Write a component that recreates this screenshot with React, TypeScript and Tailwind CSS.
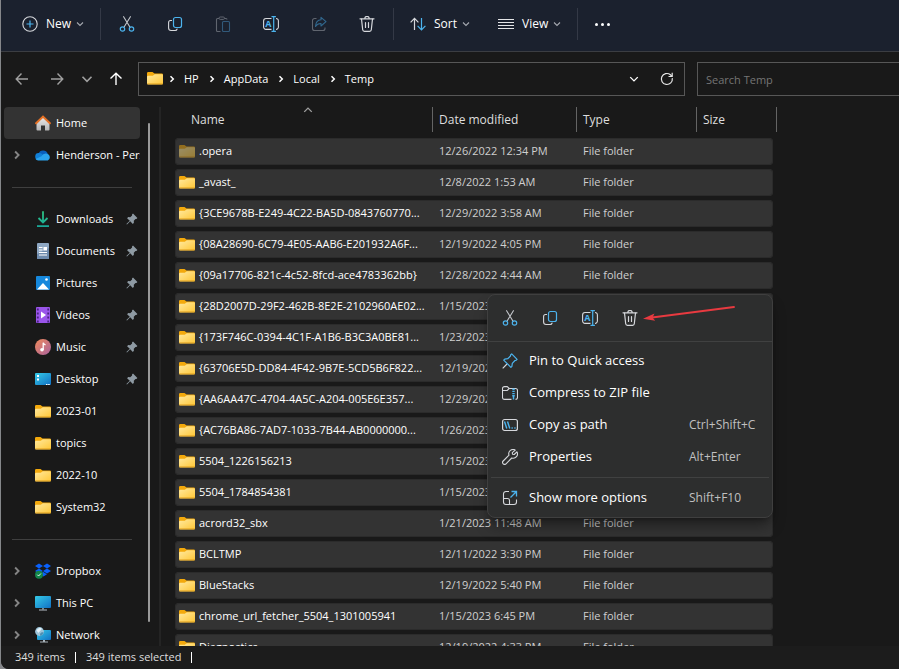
import { FC, ReactNode } from "react";

interface IconProps {
  className?: string;
}

const CutIcon: FC<IconProps> = ({ className }) => (
  <svg viewBox="0 0 16 16" className={className} fill="none" strokeLinecap="round">
    <path d="M4.6.7 10.9 11M11.4.7 5.1 11" stroke="#c4c7cc" strokeWidth="1.1" />
    <circle cx="3.5" cy="13" r="2.2" stroke="#4cb4ee" strokeWidth="1.2" />
    <circle cx="12.5" cy="13" r="2.2" stroke="#4cb4ee" strokeWidth="1.2" />
  </svg>
);

const CopyIcon: FC<IconProps> = ({ className }) => (
  <svg viewBox="0 0 16 16" className={className} fill="none">
    <path
      d="M4.6 4.5h-1a2 2 0 0 0-2 2V12a2.5 2.5 0 0 0 2.5 2.5h4a2 2 0 0 0 2-1.5"
      stroke="#d6d8dc"
      strokeWidth="1.1"
      strokeLinecap="round"
    />
    <rect x="6.5" y="1.5" width="8" height="10" rx="2" stroke="#4cb4ee" strokeWidth="1.2" />
  </svg>
);

const PasteIcon: FC<IconProps> = ({ className }) => (
  <svg viewBox="0 0 16 16" className={className} fill="none">
    <path
      d="M4 2.5H2.5a1 1 0 0 0-1 1v11a1 1 0 0 0 1 1h3M9.5 2.5H11a1 1 0 0 1 1 1"
      stroke="#60656f"
      strokeWidth="1.1"
    />
    <rect x="4" y="1" width="5.5" height="2.4" rx="1.2" stroke="#60656f" />
    <rect x="7.5" y="5.5" width="7" height="10" rx="1" stroke="#31597a" strokeWidth="1.1" />
  </svg>
);

const RenameIcon: FC<IconProps> = ({ className }) => (
  <svg viewBox="0 0 16 16" className={className} fill="none">
    <path
      d="M8.5 2.5H3A2.4 2.4 0 0 0 .6 4.9v6A2.4 2.4 0 0 0 3 13.4h5.5M13 2.5a2.4 2.4 0 0 1 2.4 2.4v6a2.4 2.4 0 0 1-2.4 2.5"
      stroke="#d6d8dc"
      strokeWidth="1.1"
    />
    <path d="M8.5.6h4.4M8.5 15.4h4.4M10.7.6v14.8" stroke="#4cb4ee" strokeWidth="1.2" />
    <text
      x="5.4"
      y="11.3"
      textAnchor="middle"
      fontSize="9"
      fontWeight="700"
      fontFamily="Open Sans, sans-serif"
      fill="#4cb4ee"
    >
      A
    </text>
  </svg>
);

const ShareIcon: FC<IconProps> = ({ className }) => (
  <svg viewBox="0 0 16 16" className={className} fill="none" strokeLinejoin="round">
    <path
      d="M5.5 2.5h-2a2 2 0 0 0-2 2v8a2 2 0 0 0 2 2H12a2 2 0 0 0 2-2v-1"
      stroke="#60656f"
      strokeWidth="1.1"
    />
    <path
      d="M10 1.3l5 4.4-5 4.3V7.5C7.5 7.4 5.8 8.4 4.5 10.5 4.7 6.6 6.5 4 10 3.8z"
      stroke="#31688f"
      strokeWidth="1.1"
    />
  </svg>
);

const TrashIcon: FC<IconProps> = ({ className }) => (
  <svg
    viewBox="0 0 16 16"
    className={className}
    fill="none"
    stroke="#d6d8dc"
    strokeWidth="1.2"
    strokeLinecap="round"
  >
    <path d="M1 2.8h14M5.8 2.6a2.2 2.2 0 0 1 4.4 0" />
    <path d="M2.5 3l1.2 10.8a1.7 1.7 0 0 0 1.7 1.5h5.2a1.7 1.7 0 0 0 1.7-1.5L13.5 3" />
    <path d="M6.5 6.5v5M9.5 6.5v5" />
  </svg>
);

const PlusIcon: FC<IconProps> = ({ className }) => (
  <svg viewBox="0 0 16 16" className={className} fill="none">
    <circle cx="8" cy="8" r="7.2" stroke="#d6d8dc" strokeWidth="1.1" />
    <path d="M8 4.5v7M4.5 8h7" stroke="#4cb4ee" strokeWidth="1.2" />
  </svg>
);

const SortIcon: FC<IconProps> = ({ className }) => (
  <svg viewBox="0 0 16 16" className={className} fill="none" strokeWidth="1.2">
    <path d="M4.5 14V2.5M.6 6.3l3.9-4 3.900 4" stroke="#d6d8dc" />
    <path d="M11.5 2v11.8M7.6 9.8l3.9 4 3.9-4" stroke="#4cb4ee" />
  </svg>
);

const ViewIcon: FC<IconProps> = ({ className }) => (
  <svg viewBox="0 0 16 16" className={className} stroke="#e4e5e7">
    <path d="M0 3.5h16M0 6.5h16M0 9.5h16M0 12.5h16" />
  </svg>
);

const Chevron: FC<IconProps> = ({ className }) => (
  <svg viewBox="0 0 8 8" className={className} fill="none" stroke="currentColor">
    <path d="M1 2.5l3 3 3-3" strokeWidth="1.1" />
  </svg>
);

const ChevronRight: FC<IconProps> = ({ className }) => (
  <svg viewBox="0 0 8 8" className={className} fill="none" stroke="currentColor">
    <path d="M2.5 1.2L5.300 4 2.5 6.800" strokeWidth="1.5" />
  </svg>
);

const ArrowIcon: FC<IconProps> = ({ className }) => (
  <svg viewBox="0 0 14 14" className={className} fill="none" stroke="currentColor" strokeWidth="1.4">
    <path d="M13 7H1.5M6.5 1.5L1.2 7l5.3 5.5" />
  </svg>
);

const RefreshIcon: FC<IconProps> = ({ className }) => (
  <svg viewBox="0 0 14 14" className={className} fill="none" stroke="#e6e6e6" strokeWidth="1.2">
    <path d="M12.3 6.2A5.5 5.5 0 1 1 10.4 2.8L12 4.3" />
    <path d="M12.2.8v3.7H8.500" />
  </svg>
);

const FolderIcon: FC<IconProps> = ({ className }) => (
  <svg viewBox="0 0 16 14" className={className}>
    <defs>
      <linearGradient id="folder" x1="0" y1="0" x2="1" y2="1">
        <stop offset="0" stopColor="#ffe9a0" />
        <stop offset="1" stopColor="#ffc736" />
      </linearGradient>
    </defs>
    <path d="M0 2.3A1.3 1.3 0 0 1 1.3 1h4.2l2 1.500h7.200A1.3 1.3 0 0 1 16 3.800V8H0z" fill="#f3a90c" />
    <path
      d="M0 5.9a1.200 1.200 0 0 1 1.200-1.200h4.600l2-1.500H15a1 1 0 0 1 1 1v8a1.200 1.200 0 0 1-1.200 1.200H1.200A1.200 1.200 0 0 1 0 12.200z"
      fill="url(#folder)"
    />
    <path d="M.3 12.900h15.400" stroke="#e0a01f" strokeWidth=".9" />
  </svg>
);

const HomeIcon: FC<IconProps> = ({ className }) => (
  <svg viewBox="0 0 16 16" className={className}>
    <defs>
      <linearGradient id="house" x1="0" y1="0" x2="0" y2="1">
        <stop offset="0" stopColor="#e8e8e8" />
        <stop offset="1" stopColor="#b4b4b4" />
      </linearGradient>
    </defs>
    <path d="M8 2.5L1.500 8.500v6a1 1 0 0 0 1 1H6v-5h4v5h3.500a1 1 0 0 0 1-1v-6z" fill="url(#house)" />
    <path d="M1.100 8.200L8 1.600l6.900 6.600" fill="none" stroke="#e57125" strokeWidth="2" strokeLinecap="round" />
  </svg>
);

const CloudIcon: FC<IconProps> = ({ className }) => (
  <svg viewBox="0 0 16 16" className={className}>
    <path d="M3.500 6.700A4.900 4.900 0 0 1 12.700 6.500l-3 4.500H4z" fill="#0a5fbd" />
    <path d="M3.800 6A4.500 4.500 0 0 1 7 7l4 4-7.400 2A3.500 3.500 0 0 1 3.800 6z" fill="#1180d8" />
    <path d="M6.500 9.300A5 5 0 0 1 12.300 6.700a3.600 3.600 0 0 1 .5 6.700H3.300a3 3 0 0 1-2.700-1.400z" fill="#2ba3ee" />
  </svg>
);

const DownloadIcon: FC<IconProps> = ({ className }) => (
  <svg viewBox="0 0 16 16" className={className} fill="none" strokeWidth="1.8">
    <defs>
      <linearGradient id="download" gradientUnits="userSpaceOnUse" x1="0" y1="0" x2="0" y2="16">
        <stop offset="0" stopColor="#2fc482" />
        <stop offset="1" stopColor="#18a89a" />
      </linearGradient>
    </defs>
    <path d="M8 .3v11M3.5 7L8 11.5 12.5 7M2 15.1h12" stroke="url(#download)" />
  </svg>
);

const DocumentIcon: FC<IconProps> = ({ className }) => (
  <svg viewBox="0 0 16 16" className={className}>
    <rect x="2" width="12" height="16" rx="1" fill="#8fa8c4" />
    <path d="M2 11l12-6v10a1 1 0 0 1-1 1H3a1 1 0 0 1-1-1z" fill="#6e8bad" />
    <path d="M4 4.500h3.500M4 7h3.500M4 9.500h8M4 12h8" stroke="#fff" strokeWidth="1.1" />
    <rect x="8.5" y="4" width="3.500" height="3.500" fill="#fff" />
  </svg>
);

const PictureIcon: FC<IconProps> = ({ className }) => (
  <svg viewBox="0 0 16 16" className={className}>
    <rect x="1" y="1" width="14" height="14" rx="1" fill="#1688dc" />
    <path d="M2 14.500L8 8l6 6.500z" fill="#fff" />
    <circle cx="11.500" cy="4.500" r="1.300" fill="#fff" />
  </svg>
);

const VideoIcon: FC<IconProps> = ({ className }) => (
  <svg viewBox="0 0 16 16" className={className}>
    <rect x="1" width="14" height="16" rx="1" fill="#9a55ea" />
    <path d="M2.800 1.500v14M13.200 1.500v14" stroke="#4a2380" strokeWidth="1.800" strokeDasharray="2 2" />
    <path d="M6 4.500v7l5-3.500z" fill="#fff" />
  </svg>
);

const MusicIcon: FC<IconProps> = ({ className }) => (
  <svg viewBox="0 0 16 16" className={className}>
    <defs>
      <linearGradient id="music" x1="0" y1="0" x2="1" y2="1">
        <stop offset="0" stopColor="#f08a5a" />
        <stop offset="1" stopColor="#a9629f" />
      </linearGradient>
    </defs>
    <circle cx="8" cy="8" r="8" fill="url(#music)" />
    <circle cx="7" cy="10.800" r="1.800" fill="#fff" />
    <path d="M8.200 11V3.800c.4 1.400 1.300 1.500 2.300 2.300" fill="none" stroke="#fff" strokeWidth="1.300" />
  </svg>
);

const DesktopIcon: FC<IconProps> = ({ className }) => (
  <svg viewBox="0 0 16 16" className={className}>
    <defs>
      <linearGradient id="screen" x1="0" y1="0" x2="1" y2="1">
        <stop offset="0" stopColor="#35cbe8" />
        <stop offset="1" stopColor="#1170c4" />
      </linearGradient>
    </defs>
    <rect y="2" width="16" height="12" rx="1" fill="url(#screen)" />
    <path d="M2 4h2v2H2zM2 7.500h2v2H2zM11 13h1.500v1H11zM13.200 13h1.500v1h-1.500z" fill="#fff" />
  </svg>
);

const DropboxIcon: FC<IconProps> = ({ className }) => (
  <svg viewBox="0 0 16 16" className={className}>
    <path
      d="M4 .5L8 3 4 5.500 0 3zM12 .5L16 3l-4 2.500L8 3zM4 5.500L8 8l-4 2.500L0 8zM12 5.500L16 8l-4 2.500L8 8zM12 11.200L8.500 13.500 6 11.500 8 8.800z"
      fill="#0a61fb"
    />
    <circle cx="4" cy="11.700" r="4" fill="#12854a" />
    <path d="M2.300 11.700l1.300 1.300 2.300-2.500" fill="none" stroke="#fff" strokeWidth=".9" />
  </svg>
);

const ComputerIcon: FC<IconProps> = ({ className }) => (
  <svg viewBox="0 0 16 16" className={className}>
    <path d="M7 12h2v2.500H7z" fill="#7b8790" />
    <path d="M4 15h8" stroke="#b5bec5" />
    <rect y="1" width="16" height="12" rx="1" fill="url(#screen)" />
  </svg>
);

const NetworkIcon: FC<IconProps> = ({ className }) => (
  <svg viewBox="0 0 16 16" className={className}>
    <path d="M8 12h2v3H8zM5 14.500h8v1H5z" fill="#a8b2ba" />
    <rect x="2" y="3" width="14" height="10" rx="1" fill="url(#screen)" />
    <circle cx="4.500" cy="4.500" r="4.400" fill="#9cc3d8" />
    <path d="M1.500 3.500C3 1 5 1 6.500 1.200 7 3 4.500 4 3.500 6z" fill="#e3f1f8" />
    <path d="M5 7.500c0-2 2-2.500 3.500-2.300C8 7.500 7 8.500 5 8.800z" fill="#4f8fb2" />
  </svg>
);

const PinnedIcon: FC<IconProps> = ({ className }) => (
  <svg viewBox="0 0 12 12" className={className} fill="#8e9aa3">
    <path d="M7 .6L11.4 5l-1 1-.9-.1-1.7 1.9.1 2-1.1 1.100-2.600-2.700L1 11.600.4 11l3.400-3.200L1.100 5.200l1.100-1.100 2 .1L6.100 2.500 6 1.600z" />
  </svg>
);

const PinIcon: FC<IconProps> = ({ className }) => (
  <svg viewBox="0 0 16 16" className={className} fill="none" strokeLinejoin="round">
    <path d="M5 11L.7 15.300" stroke="#d6d8dc" strokeWidth="1.100" />
    <path
      d="M9.700.9l5.400 5.400-1.100 1.100-1 .1-2.700 2.800-.4 3-1 1L1.700 7.100l1-1 3-.4L8.500 3l.1-1z"
      stroke="#4cb4ee"
      strokeWidth="1.200"
    />
  </svg>
);

const ZipIcon: FC<IconProps> = ({ className }) => (
  <svg viewBox="0 0 16 16" className={className} fill="none">
    <path
      d="M9.500 14.400h-7a2 2 0 0 1-2-2V3.600a2 2 0 0 1 2-2h2.700l2 1.900h6.300a2 2 0 0 1 2 2v6.900a2 2 0 0 1-2 2M.6 5.500h4.600l2-2"
      stroke="#d6d8dc"
      strokeWidth="1.100"
    />
    <path d="M11.500 3.500v8.200" stroke="#4cb4ee" strokeWidth="2.400" strokeDasharray="1.400 .8" />
    <path d="M11.500 10v4.500" stroke="#4cb4ee" strokeWidth="1.500" />
  </svg>
);

const PathIcon: FC<IconProps> = ({ className }) => (
  <svg viewBox="0 0 16 16" className={className} fill="none">
    <rect x=".6" y="2.500" width="14.800" height="11" rx="2" stroke="#d6d8dc" strokeWidth="1.200" />
    <path d="M2.500 4.500l2.300 7M5.500 4.500l2.300 7M9.500 11h1.300M12.300 11h1.300" stroke="#4cb4ee" strokeWidth="1.400" />
  </svg>
);

const WrenchIcon: FC<IconProps> = ({ className }) => (
  <svg viewBox="0 0 16 16" className={className} fill="none" stroke="#d6d8dc" strokeWidth="1.100" strokeLinejoin="round">
    <path d="M13.300 1.100A4.300 4.300 0 0 0 7 6.200L1.200 12a1.900 1.900 0 0 0 2.800 2.800L9.800 9a4.300 4.300 0 0 0 5.100-6.200L12.200 5.500l-1.700-.2-.2-1.700z" />
  </svg>
);

const MoreOptionsIcon: FC<IconProps> = ({ className }) => (
  <svg viewBox="0 0 16 16" className={className} fill="none" strokeWidth="1.100">
    <path
      d="M7 1.500H4A2.500 2.500 0 0 0 1.500 4v8A2.500 2.500 0 0 0 4 14.500h8a2.500 2.500 0 0 0 2.500-2.500V9.500M1.500 8.500h4a2 2 0 0 1 2 2v4"
      stroke="#d6d8dc"
    />
    <path d="M9.500 1.500h5v5M14.500 1.500l-6 6" stroke="#4cb4ee" strokeWidth="1.300" />
  </svg>
);

interface ToolButtonProps {
  label: string;
  disabled?: boolean;
  children: ReactNode;
}

const ToolButton: FC<ToolButtonProps> = ({ label, disabled, children }) => (
  <button type="button" aria-label={label} disabled={disabled} className="flex h-8 w-12 items-center justify-center">
    {children}
  </button>
);

const Toolbar: FC = () => (
  <div className="flex h-[52px] shrink-0 items-center border-b border-[#3b3d42] bg-[#1b212e] pb-[3px] text-[12px] font-medium text-white">
    <button type="button" className="flex w-[99px] items-center pl-[21px]">
      <PlusIcon className="h-4 w-4" />
      <span className="ml-2 w-[30px] text-left">New</span>
      <Chevron className="h-2 w-2 text-[#a5a9b0]" />
    </button>
    <div className="mr-[2px] h-8 w-px bg-[#343946]" />
    <ToolButton label="Cut">
      <CutIcon className="h-4 w-4" />
    </ToolButton>
    <ToolButton label="Copy">
      <CopyIcon className="h-4 w-4" />
    </ToolButton>
    <ToolButton label="Paste" disabled>
      <PasteIcon className="h-4 w-4" />
    </ToolButton>
    <ToolButton label="Rename">
      <RenameIcon className="h-4 w-4" />
    </ToolButton>
    <ToolButton label="Share" disabled>
      <ShareIcon className="h-4 w-4" />
    </ToolButton>
    <ToolButton label="Delete">
      <TrashIcon className="h-4 w-4" />
    </ToolButton>
    <div className="ml-[2px] h-8 w-px bg-[#343946]" />
    <button type="button" className="flex items-center pl-4">
      <SortIcon className="h-4 w-4" />
      <span className="ml-2 w-7 text-left">Sort</span>
      <Chevron className="h-2 w-2 text-[#a5a9b0]" />
    </button>
    <button type="button" className="flex items-center pl-7">
      <ViewIcon className="h-4 w-4" />
      <span className="ml-2 w-[31px] text-left">View</span>
      <Chevron className="h-2 w-2 text-[#a5a9b0]" />
    </button>
    <div className="ml-4 h-8 w-px bg-[#343946]" />
    <button type="button" aria-label="See more" className="flex h-8 w-12 items-center justify-center gap-[3px]">
      <span className="h-[3px] w-[3px] rounded-full bg-white" />
      <span className="h-[3px] w-[3px] rounded-full bg-white" />
      <span className="h-[3px] w-[3px] rounded-full bg-white" />
    </button>
  </div>
);

const crumbs = ["HP", "AppData", "Local", "Temp"];

const AddressRow: FC = () => (
  <div className="flex h-[55px] shrink-0 items-center pb-px">
    <div className="flex w-[137px] shrink-0 items-center text-[#a0a0a0]">
      <button type="button" aria-label="Back" className="ml-[14px]">
        <ArrowIcon className="h-[14px] w-[14px]" />
      </button>
      <button type="button" aria-label="Forward" className="ml-[21px]">
        <ArrowIcon className="h-[14px] w-[14px] rotate-180" />
      </button>
      <button type="button" aria-label="Recent locations" className="ml-[17px]">
        <Chevron className="h-3 w-3" />
      </button>
      <button type="button" aria-label="Up" className="ml-4 text-white">
        <ArrowIcon className="h-[14px] w-[14px] rotate-90" />
      </button>
    </div>
    <div className="flex h-[34px] min-w-0 flex-1 items-center border border-[#575757] pr-[10px] pl-2">
      <FolderIcon className="mb-[2px] h-[14px] w-4" />
      {crumbs.map((crumb) => (
        <div key={crumb} className="flex items-center">
          <ChevronRight className="mr-2 ml-[5px] h-2 w-2 text-white" />
          <a href="#" className="mr-1 text-[11px] text-white">
            {crumb}
          </a>
        </div>
      ))}
      <button type="button" aria-label="Previous locations" className="ml-auto">
        <Chevron className="h-[10px] w-[10px] text-white" />
      </button>
      <button type="button" aria-label="Refresh" className="ml-[21px]">
        <RefreshIcon className="h-[14px] w-[14px]" />
      </button>
    </div>
    <input
      type="search"
      aria-label="Search Temp"
      placeholder="Search Temp"
      className="ml-3 h-[34px] w-[202px] shrink-0 border border-r-0 border-[#575757] bg-transparent px-2 text-[11px] text-white outline-none placeholder:text-[#757575]"
    />
  </div>
);

interface NavItemProps {
  label: string;
  icon: ReactNode;
  pinned?: boolean;
  expandable?: boolean;
  active?: boolean;
}

const NavItem: FC<NavItemProps> = ({ label, icon, pinned, expandable, active }) => (
  <a
    href="#"
    className={
      active
        ? "flex h-8 items-center overflow-hidden rounded-sm bg-[#333333] text-white"
        : "flex h-8 items-center overflow-hidden text-white"
    }
  >
    <span className="flex w-[31px] shrink-0 justify-center pr-[5px] text-[#858585]">
      {expandable && <ChevronRight className="h-[10px] w-[10px]" />}
    </span>
    <span className="shrink-0">{icon}</span>
    <span className="ml-[5px] whitespace-nowrap">{label}</span>
    {pinned && <PinnedIcon className="mr-[2px] ml-auto h-3 w-3 shrink-0" />}
  </a>
);

const Divider: FC = () => (
  <div className="flex h-8 items-center px-2">
    <div className="h-px w-full bg-[#3f3f3f]" />
  </div>
);

const Sidebar: FC = () => (
  <div className="flex w-40 shrink-0 justify-between border-r-2 border-[#242424] text-[11px]">
    <nav className="ml-[3px] w-[136px]">
      <NavItem label="Home" icon={<HomeIcon className="h-4 w-4" />} active />
      <NavItem label="Henderson - Personal" icon={<CloudIcon className="h-4 w-4" />} expandable />
      <Divider />
      <NavItem label="Downloads" icon={<DownloadIcon className="h-4 w-4" />} pinned />
      <NavItem label="Documents" icon={<DocumentIcon className="h-4 w-4" />} pinned />
      <NavItem label="Pictures" icon={<PictureIcon className="h-4 w-4" />} pinned />
      <NavItem label="Videos" icon={<VideoIcon className="h-4 w-4" />} pinned />
      <NavItem label="Music" icon={<MusicIcon className="h-4 w-4" />} pinned />
      <NavItem label="Desktop" icon={<DesktopIcon className="h-4 w-4" />} pinned />
      <NavItem label="2023-01" icon={<FolderIcon className="h-[14px] w-4" />} />
      <NavItem label="topics" icon={<FolderIcon className="h-[14px] w-4" />} />
      <NavItem label="2022-10" icon={<FolderIcon className="h-[14px] w-4" />} />
      <NavItem label="System32" icon={<FolderIcon className="h-[14px] w-4" />} />
      <Divider />
      <NavItem label="Dropbox" icon={<DropboxIcon className="h-4 w-4" />} expandable />
      <NavItem label="This PC" icon={<ComputerIcon className="h-4 w-4" />} expandable />
      <NavItem label="Network" icon={<NetworkIcon className="h-4 w-4" />} expandable />
    </nav>
    <div className="mt-4 mr-[9px] mb-6 w-[2px] rounded-full bg-[#9a9a9a]" />
  </div>
);

const files = [
  { name: ".opera", date: "12/26/2022 12:34 PM", hidden: true },
  { name: "_avast_", date: "12/8/2022 1:53 AM" },
  { name: "{3CE9678B-E249-4C22-BA5D-0843760770...", date: "12/29/2022 3:58 AM" },
  { name: "{08A28690-6C79-4E05-AAB6-E201932A6F...", date: "12/19/2022 4:05 PM" },
  { name: "{09a17706-821c-4c52-8fcd-ace4783362bb}", date: "12/28/2022 4:44 AM" },
  { name: "{28D2007D-29F2-462B-8E2E-2102960AE02...", date: "1/15/2023" },
  { name: "{173F746C-0394-4C1F-A1B6-B3C3A0BE81...", date: "1/23/2023" },
  { name: "{63706E5D-DD84-4F42-9B7E-5CD5B6F822...", date: "12/19/2022" },
  { name: "{AA6AA47C-4704-4A5C-A204-005E6E357...", date: "12/29/2022" },
  { name: "{AC76BA86-7AD7-1033-7B44-AB0000000...", date: "1/26/2023" },
  { name: "5504_1226156213", date: "1/15/2023" },
  { name: "5504_1784854381", date: "1/15/2023" },
  { name: "acrord32_sbx", date: "1/21/2023 11:48 AM" },
  { name: "BCLTMP", date: "12/11/2022 3:30 PM" },
  { name: "BlueStacks", date: "12/19/2022 5:40 PM" },
  { name: "chrome_url_fetcher_5504_1301005941", date: "1/15/2023 6:45 PM" },
  { name: "Diagnostics", date: "12/19/2022 4:33 PM" },
];

const FileTable: FC = () => (
  <table className="ml-[14px] block">
    <thead className="block">
      <tr className="grid h-[25px] grid-cols-[258px_144px_120px_80px] text-left text-[#dedede]">
        <th className="relative flex items-center border-r border-[#646464] pl-4 font-normal">
          Name
          <Chevron className="absolute -top-[2px] left-32 h-[10px] w-[10px] rotate-180 text-[#a0a0a0]" />
        </th>
        <th className="flex items-center border-r border-[#646464] pl-[6px] font-normal">Date modified</th>
        <th className="flex items-center border-r border-[#646464] pl-[6px] font-normal">Type</th>
        <th className="flex items-center border-r border-[#646464] pl-[6px] font-normal">Size</th>
      </tr>
    </thead>
    <tbody className="flex flex-col gap-1 pt-[6px] text-[11px]">
      {files.map((file) => (
        <tr
          key={file.name}
          className="grid h-[27px] w-[598px] grid-cols-[258px_144px_120px_76px] items-center rounded-sm bg-[#333333] text-[#cfcfcf] ring-1 ring-[#2b2b2b] ring-inset"
        >
          <td className="flex items-center pl-1 whitespace-nowrap text-white">
            <FolderIcon
              className={file.hidden ? "mb-[2px] h-[14px] w-4 shrink-0 opacity-50" : "mb-[2px] h-[14px] w-4 shrink-0"}
            />
            <span className="ml-1">{file.name}</span>
          </td>
          <td className="pl-[6px] whitespace-nowrap">{file.date}</td>
          <td className="pl-[6px]">File folder</td>
          <td />
        </tr>
      ))}
    </tbody>
  </table>
);

interface MenuItemProps {
  label: string;
  icon: ReactNode;
  shortcut?: string;
}

const MenuItem: FC<MenuItemProps> = ({ label, icon, shortcut }) => (
  <button type="button" className="flex h-8 w-full items-center pl-[14px] text-left text-[13px] text-white">
    {icon}
    <span className="ml-[11px] w-40">{label}</span>
    {shortcut && <span className="text-[12px] text-[#c0c0c0]">{shortcut}</span>}
  </button>
);

const ContextMenu: FC = () => (
  <div className="absolute top-[187px] left-[486px] w-[286px] rounded-lg border border-[#3f3f3f] bg-[#2d2e2e] pb-[3px] shadow-lg shadow-black/40">
    <div className="flex h-[47px] items-center border-b border-[#404141] pl-[2px]">
      <button type="button" aria-label="Cut" className="flex w-10 justify-center">
        <CutIcon className="h-4 w-4" />
      </button>
      <button type="button" aria-label="Copy" className="flex w-10 justify-center">
        <CopyIcon className="h-4 w-4" />
      </button>
      <button type="button" aria-label="Rename" className="flex w-10 justify-center">
        <RenameIcon className="h-4 w-4" />
      </button>
      <button type="button" aria-label="Delete" className="flex w-10 justify-center">
        <TrashIcon className="h-4 w-4" />
      </button>
    </div>
    <svg viewBox="0 0 94 18" className="absolute top-[9px] left-[154px] h-[18px] w-[94px]" fill="none">
      <path d="M10 13.5L92 3" stroke="#e83a40" strokeWidth="1.8" strokeLinecap="round" />
      <path d="M1 14.7L12.5 9.5 10.5 13.5 13.2 16.8z" fill="#e83a40" />
    </svg>
    <div className="pt-[3px]">
      <MenuItem label="Pin to Quick access" icon={<PinIcon className="h-4 w-4" />} />
      <MenuItem label="Compress to ZIP file" icon={<ZipIcon className="h-4 w-4" />} />
      <MenuItem label="Copy as path" icon={<PathIcon className="h-4 w-4" />} shortcut="Ctrl+Shift+C" />
      <MenuItem label="Properties" icon={<WrenchIcon className="h-4 w-4" />} shortcut="Alt+Enter" />
    </div>
    <div className="mx-[3px] my-1 h-px bg-[#404141]" />
    <MenuItem label="Show more options" icon={<MoreOptionsIcon className="h-4 w-4" />} shortcut="Shift+F10" />
  </div>
);

const StatusBar: FC = () => (
  <div className="flex h-[23px] shrink-0 items-center gap-[10px] bg-[#1c1c1c] pl-[14px] text-[11px] text-[#dedede]">
    <span>349 items</span>
    <span className="h-[11px] w-px bg-white" />
    <span>349 items selected</span>
    <span className="h-[11px] w-px bg-white" />
  </div>
);

const App: FC = () => {
  return (
    <div className="h-screen bg-[#85878a] pl-px font-['Open_Sans',sans-serif] text-[12px]">
      <div className="flex h-full flex-col overflow-hidden rounded-bl-lg bg-[#191919]">
        <Toolbar />
        <AddressRow />
        <div className="relative flex min-h-0 flex-1">
          <div className="flex min-w-0 flex-1 overflow-hidden">
            <Sidebar />
            <FileTable />
          </div>
          <ContextMenu />
        </div>
        <StatusBar />
      </div>
    </div>
  );
};

export default App;
